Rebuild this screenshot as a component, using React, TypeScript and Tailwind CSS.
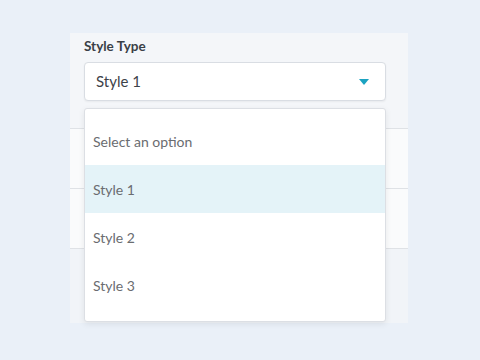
import React from "react";

const options = ["Select an option", "Style 1", "Style 2", "Style 3"];

function Caret() {
  return (
    <svg width="10" height="6" viewBox="0 0 10 6">
      <path d="M0 0 L10 0 L5 6 Z" fill="#1ba3c1" />
    </svg>
  );
}

export default function App() {
  const selected = "Style 1";
  return (
    <div className="w-[480px] h-[360px] bg-[#eaf0f8] pt-[33px] pl-[70px] font-['Lato',sans-serif]">
      <div className="relative w-[338px] h-[290px] bg-[#f4f6f9]">
        {/* Form header */}
        <div className="h-[95px] pl-[14px] pt-[4px] bg-[#f4f6f9]">
          <label className="block text-[13.5px] font-bold text-[#3a3f46] leading-[18px]">Style Type</label>
          <div className="mt-[7px] w-[302px] h-[39px] bg-white border border-[#d9dde3] rounded-[4px] flex items-center justify-between pl-[11px] pr-[16px] shadow-[0_1px_2px_rgba(0,0,0,0.05)]">
            <span className="text-[15px] text-[#3d4249]">{selected}</span>
            <Caret />
          </div>
        </div>
        {/* rows behind */}
        <div className="h-[60px] border-t border-[#dfe2e6] bg-[#fafbfc]" />
        <div className="h-[60px] border-t border-[#dfe2e6] bg-[#fafbfc]" />
        <div className="h-[75px] border-t border-[#dfe2e6] bg-[#f1f4f8]" />

        {/* Dropdown menu */}
        <div className="absolute left-[14px] top-[75px] w-[302px] h-[214px] bg-white border border-[#dcdfe4] rounded-[3px] shadow-[0_2px_6px_rgba(0,0,0,0.08)] pt-[8px]">
          {options.map((o) => (
            <div
              key={o}
              className={
                "h-[48px] flex items-center pl-[8px] text-[14px] text-[#6a6c70] " +
                (o === selected ? "bg-[#e4f3f8]" : "")
              }
            >
              {o}
            </div>
          ))}
        </div>
      </div>
    </div>
  );
}
